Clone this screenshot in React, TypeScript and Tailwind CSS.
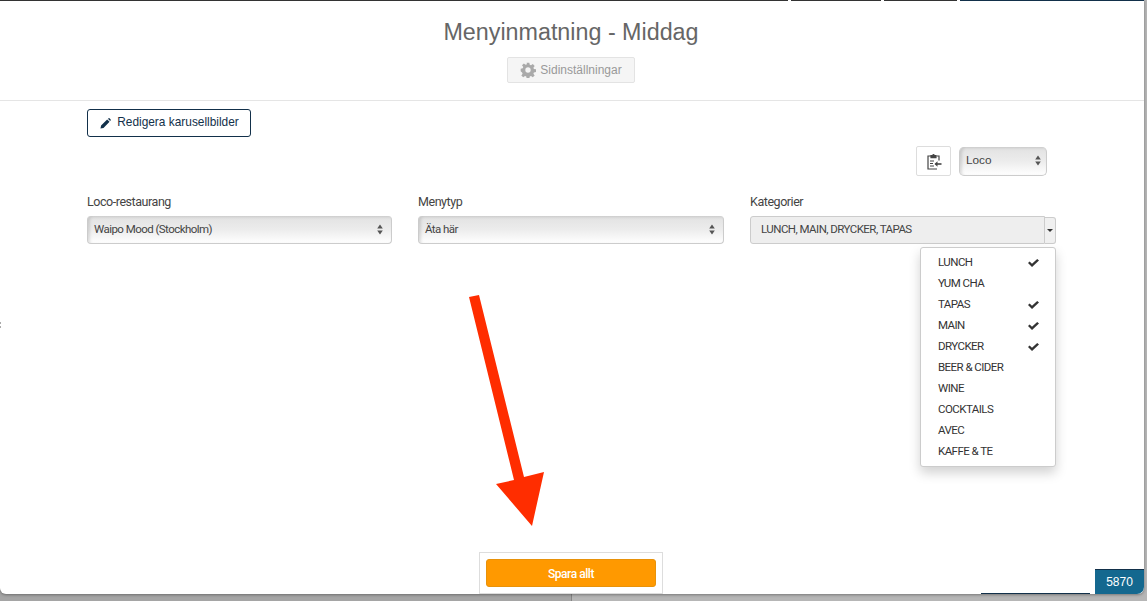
const categories = [
  { name: 'LUNCH', checked: true },
  { name: 'YUM CHA', checked: false },
  { name: 'TAPAS', checked: true },
  { name: 'MAIN', checked: true },
  { name: 'DRYCKER', checked: true },
  { name: 'BEER & CIDER', checked: false },
  { name: 'WINE', checked: false },
  { name: 'COCKTAILS', checked: false },
  { name: 'AVEC', checked: false },
  { name: 'KAFFE & TE', checked: false },
];

function UpDown() {
  return (
    <svg width="6" height="11" viewBox="0 0 6 11" className="shrink-0">
      <path d="M3 0.5 L5.8 4.5 H0.2 Z M3 10.5 L0.2 6.5 H5.8 Z" fill="#555" />
    </svg>
  );
}

function CheckMark() {
  return (
    <svg width="11" height="8" viewBox="0 0 11 8" className="shrink-0">
      <path d="M0 4 L1.6 2.4 L4 4.7 L9.2 0 L11 1.6 L4 8 Z" fill="#333" />
    </svg>
  );
}

function Select({ label, value }: { label: string; value: string }) {
  return (
    <div className="flex flex-col">
      <span className="h-[23px] text-[12.5px] leading-[18px] text-[#444] tracking-[-0.45px]">{label}</span>
      <div className="h-[28px] flex items-center justify-between pl-[6px] pr-[8px] rounded-[4px] border-b border-x border-[#ccc] bg-gradient-to-b from-[#e2e2e2] via-[#ececec] to-white shadow-[inset_2px_1px_3px_rgba(0,0,0,0.12)] text-[11.5px] tracking-[-0.55px] text-[#444]">
        <span>{value}</span>
        <UpDown />
      </div>
    </div>
  );
}

export default function App() {
  return (
    <div className="relative w-[1147px] h-[601px] overflow-hidden bg-[linear-gradient(to_right,#a5a5a5_571px,#858585_571px,#858585_572px,#b6b6b6_572px)] font-['Roboto',sans-serif]">
      <div className="w-[1144px] h-[594px] bg-white rounded-b-[6px] shadow-[0_1px_3px_rgba(0,0,0,0.35)] flex flex-col">
        {/* top tab line */}
        <div className="flex h-[1px] shrink-0 gap-[3px]">
          <div className="w-[788px] bg-[#333]" />
          <div className="w-[90px] bg-[#333]" />
          <div className="w-[73px] bg-[#333]" />
          <div className="flex-1 bg-[#12304a]" />
        </div>

        {/* header */}
        <div className="h-[100px] shrink-0 border-b border-[#e5e5e5] flex flex-col items-center pr-[2px] font-['Liberation_Sans',sans-serif]">
          <h1 className="mt-[16px] text-[23.3px] leading-[30px] text-[#666]">Menyinmatning - Middag</h1>
          <button className="mt-[10px] w-[128px] h-[26px] flex items-center justify-center gap-[4px] rounded-[2px] border border-[#e3e3e3] bg-[#f5f5f5] text-[12px] text-[#999]">
            <svg width="16" height="16" viewBox="0 0 24 24" fill="#aaa">
              <path fillRule="evenodd" d="M10 1h4l.6 3.2 1.9.8 2.7-1.9 2.8 2.8-1.9 2.7.8 1.9 3.1.5v4l-3.1.6-.8 1.9 1.9 2.7-2.8 2.8-2.7-1.9-1.9.8-.6 3.1h-4l-.6-3.1-1.9-.8-2.7 1.9-2.8-2.8 1.9-2.7-.8-1.9L1 14V10l3.1-.5.8-1.9L3 4.9l2.8-2.8 2.7 1.9 1.9-.8zM12 8a4 4 0 1 0 0 8 4 4 0 0 0 0-8z" />
            </svg>
            Sidinställningar
          </button>
        </div>

        {/* content */}
        <div className="flex-1 pl-[87px] pr-[87px] pt-[8px] flex flex-col">
          <button className="self-start w-[164px] h-[28px] flex items-center justify-center gap-[6px] pl-[1px] rounded-[3px] border border-[#12304a] bg-white text-[11.9px] text-[#12304a] font-['Liberation_Sans',sans-serif]">
            <svg width="11" height="11" viewBox="0 0 12 12" fill="#12304a">
              <path d="M0.5 11.5 L1.2 8.2 L7.8 1.6 L10.4 4.2 L3.8 10.8 Z M8.6 0.9 L9.5 0.3 Q10 0 10.5 0.4 L11.6 1.5 Q12 2 11.7 2.5 L11.1 3.4 Z" />
            </svg>
            Redigera karusellbilder
          </button>

          <div className="mt-[9px] flex justify-end items-center gap-[8px] pr-[10px]">
            <button className="w-[35px] h-[30px] flex items-center justify-center rounded-[2px] border border-[#ddd] bg-white">
              <svg width="16" height="17" viewBox="0 0 16 17" fill="none" stroke="#444" strokeWidth="1.2">
                <path d="M10.5 3 H13 V7.5 M5 3 H2 V16 H11" />
                <path d="M5 4.6 V2.6 H6.6 Q7.5 0.6 8.4 2.6 H10 V4.6 Z" fill="#444" />
                <path d="M4 8 H8 M4 10.5 H7 M4 13 H8" />
                <path d="M15.5 11 H9.5" strokeWidth="1.6" />
                <path d="M11.5 8.2 L8.5 11 L11.5 13.8 Z" fill="#444" stroke="none" />
              </svg>
            </button>
            <div className="w-[88px] h-[29px] flex items-center justify-between pl-[6px] pr-[5px] rounded-[5px] border-b border-x border-[#ccc] bg-gradient-to-b from-[#e2e2e2] via-[#ececec] to-white shadow-[inset_2px_1px_3px_rgba(0,0,0,0.12)] text-[11.8px] text-[#444] font-['Liberation_Sans',sans-serif]">
              <span>Loco</span>
              <UpDown />
            </div>
          </div>

          <div className="mt-[17px] grid grid-cols-[305px_306px_306px] gap-x-[26px]">
            <Select label="Loco-restaurang" value="Waipo Mood (Stockholm)" />
            <Select label="Menytyp" value="Äta här" />
            <div className="flex flex-col">
              <span className="h-[23px] text-[12.5px] leading-[18px] text-[#444] tracking-[-0.45px]">Kategorier</span>
              <div className="flex items-center">
                <div className="w-[295px] h-[28px] flex items-center pl-[10px] rounded-l-[3px] border border-[#ccc] bg-[#eee] text-[11.5px] tracking-[-0.55px] text-[#444]">
                  LUNCH, MAIN, DRYCKER, TAPAS
                </div>
                <div className="w-[11px] h-[27px] flex items-center justify-center rounded-r-[3px] border-y border-r border-[#ccc] bg-[#f0f0f0]">
                  <span className="block w-0 h-0 border-x-[3px] border-x-transparent border-t-[3px] border-t-[#333]" />
                </div>
              </div>
            </div>
          </div>
        </div>

        {/* save bar */}
        <div className="flex justify-center shrink-0 pr-[2px]">
          <div className="w-[184px] h-[42px] p-[6px] border border-[#ddd] bg-white">
            <button className="w-full h-full pt-[1px] rounded-[3px] border border-[#e8920a] bg-[#ff9900] text-[12px] font-medium tracking-[-0.45px] text-white">Spara allt</button>
          </div>
        </div>
      </div>

      {/* open category menu */}
      <ul className="absolute left-[920px] top-[247px] w-[136px] h-[220px] pt-[4px] rounded-[3px] border border-[#ccc] bg-white shadow-[0_6px_12px_rgba(0,0,0,0.18)] text-[11.5px] tracking-[-0.55px] text-[#333]">
        {categories.map((c) => (
          <li key={c.name} className="h-[21px] flex items-center justify-between pl-[17px] pr-[16px]">
            <span>{c.name}</span>
            {c.checked && <CheckMark />}
          </li>
        ))}
      </ul>

      {/* red annotation arrow */}
      <svg className="absolute left-0 top-0" width="1147" height="601" viewBox="0 0 1147 601">
        <path d="M469 297 L479 295 L524 477 L544 472 L532 526 L496 484 L514 480 Z" fill="#ff2d00" />
      </svg>

      {/* bits of the page behind the modal */}
      <div className="absolute left-[981px] top-[593px] w-[109px] h-[1px] bg-[#12304a]" />
      <span className="absolute left-0 top-[322px] w-[1px] h-[2px] bg-[#aaa]" />
      <span className="absolute left-0 top-[326px] w-[1px] h-[2px] bg-[#aaa]" />

      {/* counter badge */}
      <div className="absolute left-[1095px] top-[569px] w-[49px] h-[25px] flex items-center justify-center rounded-br-[7px] border-t border-[#12304a] bg-[#14688f] text-[12px] font-medium text-white font-['Liberation_Sans',sans-serif]">
        5870
      </div>
    </div>
  );
}
